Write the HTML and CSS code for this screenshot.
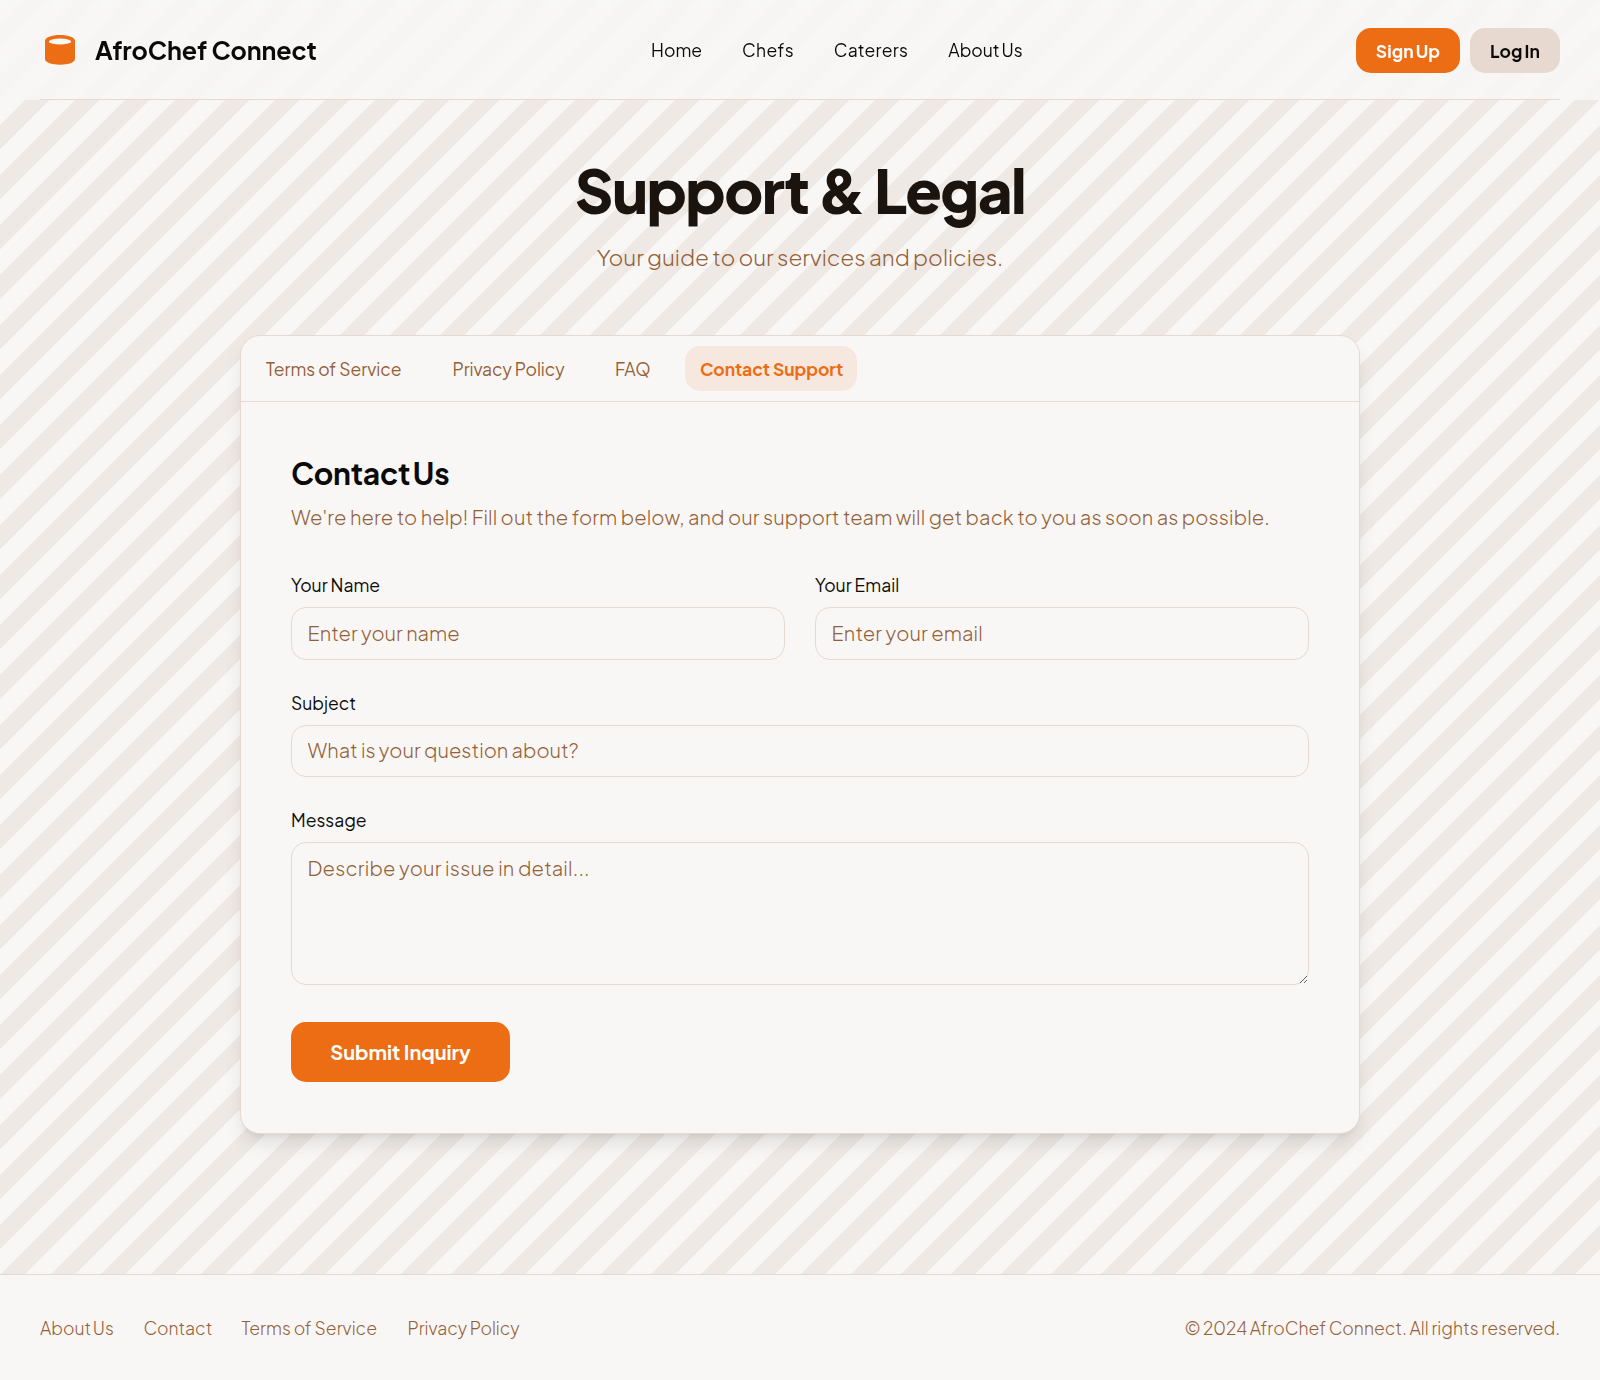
FILE: index.html
```html
<!DOCTYPE html>
<html lang="en">
<head>
<meta charset="utf-8">
<title>Support &amp; Legal - AfroChef Connect</title>
<link rel="stylesheet" href="styles.css">
</head>
<body>
<header class="site-header">
  <div class="header-inner">
    <a class="brand">
      <svg class="brand-icon" viewBox="0 0 40 40" aria-hidden="true">
        <path fill="#ec6d13" d="M20 5C11.500 5 5 7.400 5 11V29C5 32.500 11.500 34.700 20 34.700S35 32.500 35 29V11C35 7.400 28.500 5 20 5Z"/>
        <ellipse fill="#f8f7f6" cx="20" cy="11.500" rx="11.200" ry="3"/>
      </svg>
      <span class="brand-name">AfroChef Connect</span>
    </a>
    <nav class="main-nav">
      <a>Home</a><a class="nav-wide">Chefs</a><a class="nav-wide">Caterers</a><a class="nav-about">About Us</a>
    </nav>
    <div class="actions">
      <button class="btn btn-primary">Sign Up</button>
      <button class="btn btn-secondary">Log In</button>
    </div>
  </div>
</header>

<main class="main">
  <h1 class="title">Support &amp; Legal</h1>
  <p class="subtitle">Your guide to our services and policies.</p>

  <section class="card">
    <nav class="tabs">
      <a class="tab tab-terms">Terms of Service</a>
      <a class="tab tab-privacy">Privacy Policy</a>
      <a class="tab tab-faq">FAQ</a>
      <a class="tab tab-active">Contact Support</a>
    </nav>
    <div class="card-body">
      <h2 class="card-title">Contact Us</h2>
      <p class="card-text">We're here to help! Fill out the form below, and our support team will get back to you as soon as possible.</p>
      <form class="form">
        <div class="form-row">
          <label class="field"><span class="label">Your Name</span><input class="input" type="text" placeholder="Enter your name"></label>
          <label class="field"><span class="label">Your Email</span><input class="input input-email" type="email" placeholder="Enter your email"></label>
        </div>
        <label class="field"><span class="label">Subject</span><input class="input" type="text" placeholder="What is your question about?"></label>
        <label class="field"><span class="label">Message</span><textarea class="input textarea" placeholder="Describe your issue in detail..."></textarea></label>
        <button class="submit" type="button">Submit Inquiry</button>
      </form>
    </div>
  </section>
</main>

<footer class="footer">
  <nav class="footer-nav">
    <a class="foot-about">About Us</a><a class="foot-contact">Contact</a><a class="foot-terms">Terms of Service</a><a class="foot-privacy">Privacy Policy</a>
  </nav>
  <p class="copyright">© 2024 AfroChef Connect. All rights reserved.</p>
</footer>
</body>
</html>
```
FILE: styles.css
```css
* { box-sizing: border-box; }

body {
  --bg: #f8f7f6;
  --ink: #1b130d;
  --muted: #946036;
  --line: #e7d9cf;
  --primary: #ec6d13;
  --stripe: #eee9e5;
  margin: 0;
  min-height: 1380px;
  display: flex;
  flex-direction: column;
  font-family: "Plus Jakarta Sans", Inter, sans-serif;
  font-size: 20px;
  font-weight: 350;
  color: #0c0a08;
  background-color: var(--bg);
  /* 25px stripes measured along x: half period = 25 / sqrt(2) */
  background-image: repeating-linear-gradient(135deg,
    transparent 0, transparent 17.3px,
    var(--stripe) 18.1px, var(--stripe) 34.6px,
    transparent 35.355px);
}

h1, h2, p { margin: 0; }
button, input, textarea { font: inherit; color: inherit; }

/* Header */
.site-header {
  height: 100px;
  padding: 0 40px;
  background: rgba(248, 247, 246, .8);
  backdrop-filter: blur(5px);
}
.header-inner {
  height: 100px;
  display: flex;
  align-items: center;
  justify-content: space-between;
  border-bottom: 1px solid var(--line);
}
.brand { display: flex; align-items: center; gap: 15px; padding-top: 1px; }
.brand-icon { width: 40px; height: 40px; display: block; }
.brand-name { font-size: 25px; font-weight: 670; line-height: 31px; white-space: nowrap; letter-spacing: -.07px; }
.main-nav { display: flex; gap: 40px; padding: 2px 0 0 1px; font-size: 17.5px; font-weight: 450; line-height: 25px; }
.nav-wide { letter-spacing: .3px; }
.nav-about { word-spacing: -1px; }
.actions { display: flex; gap: 10px; padding-top: 1px; }
.btn {
  height: 45px;
  padding: 1px 0 0;
  border: 0;
  border-radius: 15px;
  font-size: 17.5px;
  font-weight: 670;
  letter-spacing: .1px;
  word-spacing: -1.2px;
}
.btn-primary { width: 104px; background: var(--primary); color: #fff; }
.btn-secondary { width: 90px; background: #e7d9cf; }

/* Page heading */
.main { padding-top: 60px; flex: 1; }
.title { font-size: 60px; line-height: 59px; font-weight: 800; letter-spacing: -1.55px; text-align: center; color: var(--ink); }
.subtitle { margin-top: 21px; font-size: 22.5px; line-height: 35px; text-align: center; color: var(--muted); word-spacing: -.5px; }

/* Card */
.card {
  width: 1120px;
  height: 798.5px;
  margin: 60px auto 0;
  background: var(--bg);
  border: 1px solid var(--line);
  border-radius: 20px;
  box-shadow: 0 12.5px 18.75px -3.75px rgba(0, 0, 0, .1), 0 5px 7.5px -5px rgba(0, 0, 0, .1);
}
.tabs { display: flex; gap: 20px; padding: 10px; border-bottom: 1px solid var(--line); }
.tab {
  height: 45px;
  padding: 0 15px;
  border-radius: 15px;
  font-size: 17.5px;
  font-weight: 450;
  line-height: 46px;
  white-space: nowrap;
  color: var(--muted);
}
.tab-terms { width: 166.5px; }
.tab-privacy { width: 142.5px; letter-spacing: -.07px; }
.tab-faq { width: 65px; }
.tab-active { width: 172px; font-weight: 670; letter-spacing: -.06px; color: var(--primary); background: rgba(236, 109, 19, .1); }

.card-body { padding: 51px 50px 50px; }
.card-title { font-size: 30px; line-height: 40px; font-weight: 670; word-spacing: -2.5px; letter-spacing: -.2px; }
.card-text { margin-top: 9px; line-height: 30px; color: var(--muted); letter-spacing: .08px; white-space: nowrap; }

/* Form */
.form { margin-top: 40px; display: flex; flex-direction: column; gap: 30px; align-items: flex-start; }
.form-row { display: grid; grid-template-columns: 1fr 1fr; gap: 30px; width: 100%; }
.field { display: flex; flex-direction: column; gap: 9px; width: 100%; }
.label { font-size: 17.5px; line-height: 26px; font-weight: 450; }
.input {
  width: 100%;
  height: 52.5px;
  padding: 0 15px 2px 15.5px;
  border: 1px solid var(--line);
  border-radius: 15px;
  background: transparent;
  outline: none;
}
.input-email { letter-spacing: .1px; }
.input::placeholder { color: var(--muted); opacity: 1; }
.textarea { height: 142.5px; padding-top: 9.5px; line-height: 30px; display: block; resize: vertical; letter-spacing: .18px; }
.submit {
  width: 219px;
  height: 60.5px;
  margin-top: 7px;
  padding: 0 0 1px;
  border: 0;
  border-radius: 15px;
  background: var(--primary);
  color: #fff;
  font-weight: 670;
}

/* Footer */
.footer {
  height: 106px;
  padding: 1px 40px 0;
  display: flex;
  align-items: center;
  justify-content: space-between;
  border-top: 1px solid var(--line);
  background: var(--bg);
  font-size: 17.5px;
  line-height: 25px;
  color: var(--muted);
}
.footer-nav { display: flex; gap: 30px; white-space: nowrap; }
.foot-about { width: 73.5px; word-spacing: -1.5px; }
.foot-contact { width: 68px; }
.foot-terms { width: 136px; }
.foot-privacy { letter-spacing: -.05px; }
.copyright { word-spacing: -.2px; }
```
